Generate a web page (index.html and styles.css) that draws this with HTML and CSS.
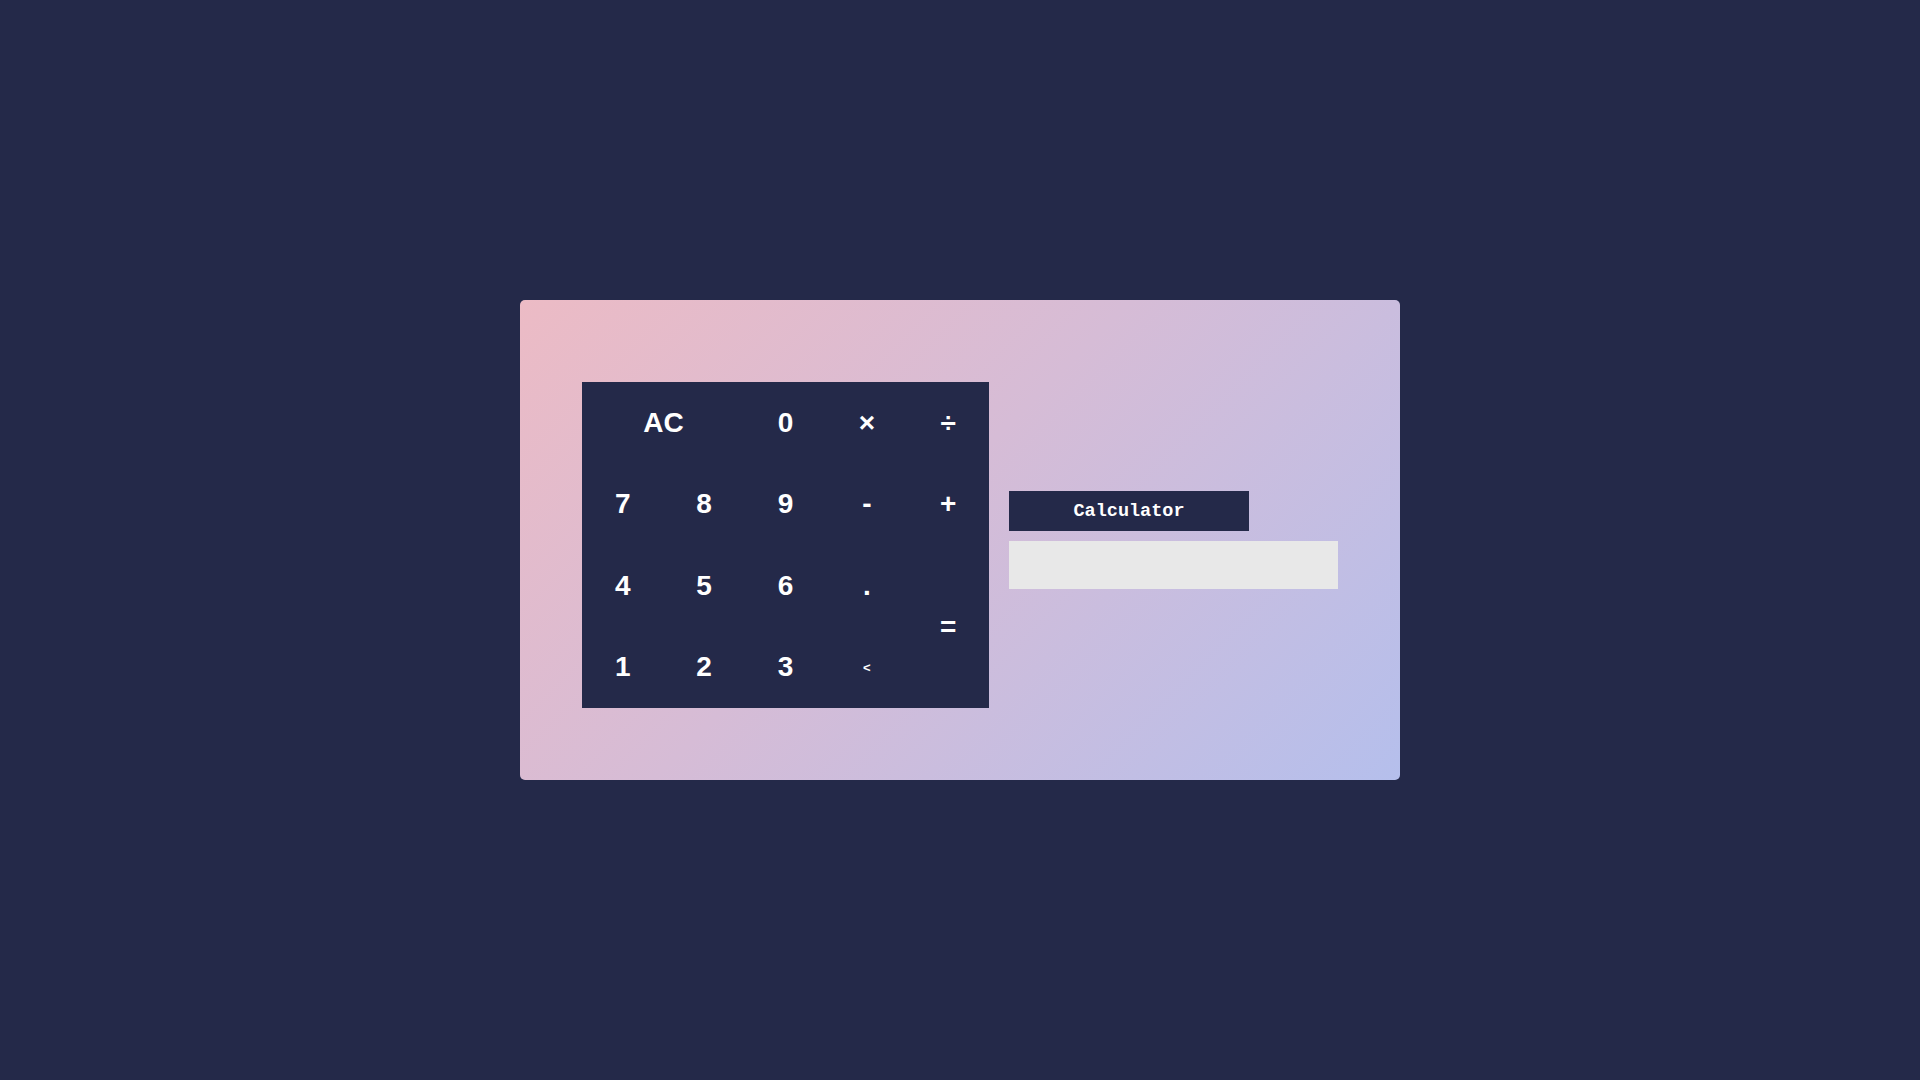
FILE: index.html
```html
<!DOCTYPE html>
<html>
<head>
<meta charset="utf-8">
<link rel="stylesheet" href="styles.css">
</head>
<body>
<div class="card">
  <div class="keypad">
    <button class="key span2">AC</button>
    <button class="key">0</button>
    <button class="key">×</button>
    <button class="key">÷</button>
    <button class="key">7</button>
    <button class="key">8</button>
    <button class="key">9</button>
    <button class="key">-</button>
    <button class="key">+</button>
    <button class="key">4</button>
    <button class="key">5</button>
    <button class="key">6</button>
    <button class="key">.</button>
    <button class="key rowspan2">=</button>
    <button class="key">1</button>
    <button class="key">2</button>
    <button class="key">3</button>
    <button class="key small">&lt;</button>
  </div>
  <div class="side">
    <div class="title">Calculator</div>
    <input class="display" type="text">
  </div>
</div>
</body>
</html>
```
FILE: styles.css
```css
html, body {
  margin: 0;
  padding: 0;
  height: 100%;
}
body {
  background: #242949;
  display: flex;
  align-items: center;
  justify-content: center;
}
.card {
  width: 880px;
  height: 480px;
  box-sizing: border-box;
  border-radius: 5px;
  background: linear-gradient(135deg, #ecbbc5 0%, #d6bcd6 45%, #b5bfec 100%);
  display: flex;
  align-items: flex-start;
  padding: 82px 0 0 62px;
  gap: 20px;
}
.keypad {
  width: 407px;
  height: 326px;
  background: #242949;
  display: grid;
  grid-template-columns: repeat(5, 1fr);
  grid-template-rows: repeat(4, 1fr);
}
.key {
  background: transparent;
  border: none;
  padding: 0;
  margin: 0;
  color: #ffffff;
  font-family: "Liberation Sans", Arial, sans-serif;
  font-weight: bold;
  font-size: 28px;
  display: flex;
  align-items: center;
  justify-content: center;
}
.span2 { grid-column: span 2; }
.rowspan2 { grid-row: span 2; }
.small { font-size: 13px; }
.side {
  margin-top: 109px;
  display: flex;
  flex-direction: column;
  gap: 10px;
}
.title {
  width: 240px;
  height: 40px;
  background: #242949;
  color: #ffffff;
  font-family: "Liberation Mono", "Courier New", monospace;
  font-weight: bold;
  font-size: 18.5px;
  display: flex;
  align-items: center;
  justify-content: center;
}
.display {
  width: 329px;
  height: 48px;
  box-sizing: border-box;
  border: none;
  background: #e8e8e8;
  margin: 0;
  padding: 0 10px;
}
```
